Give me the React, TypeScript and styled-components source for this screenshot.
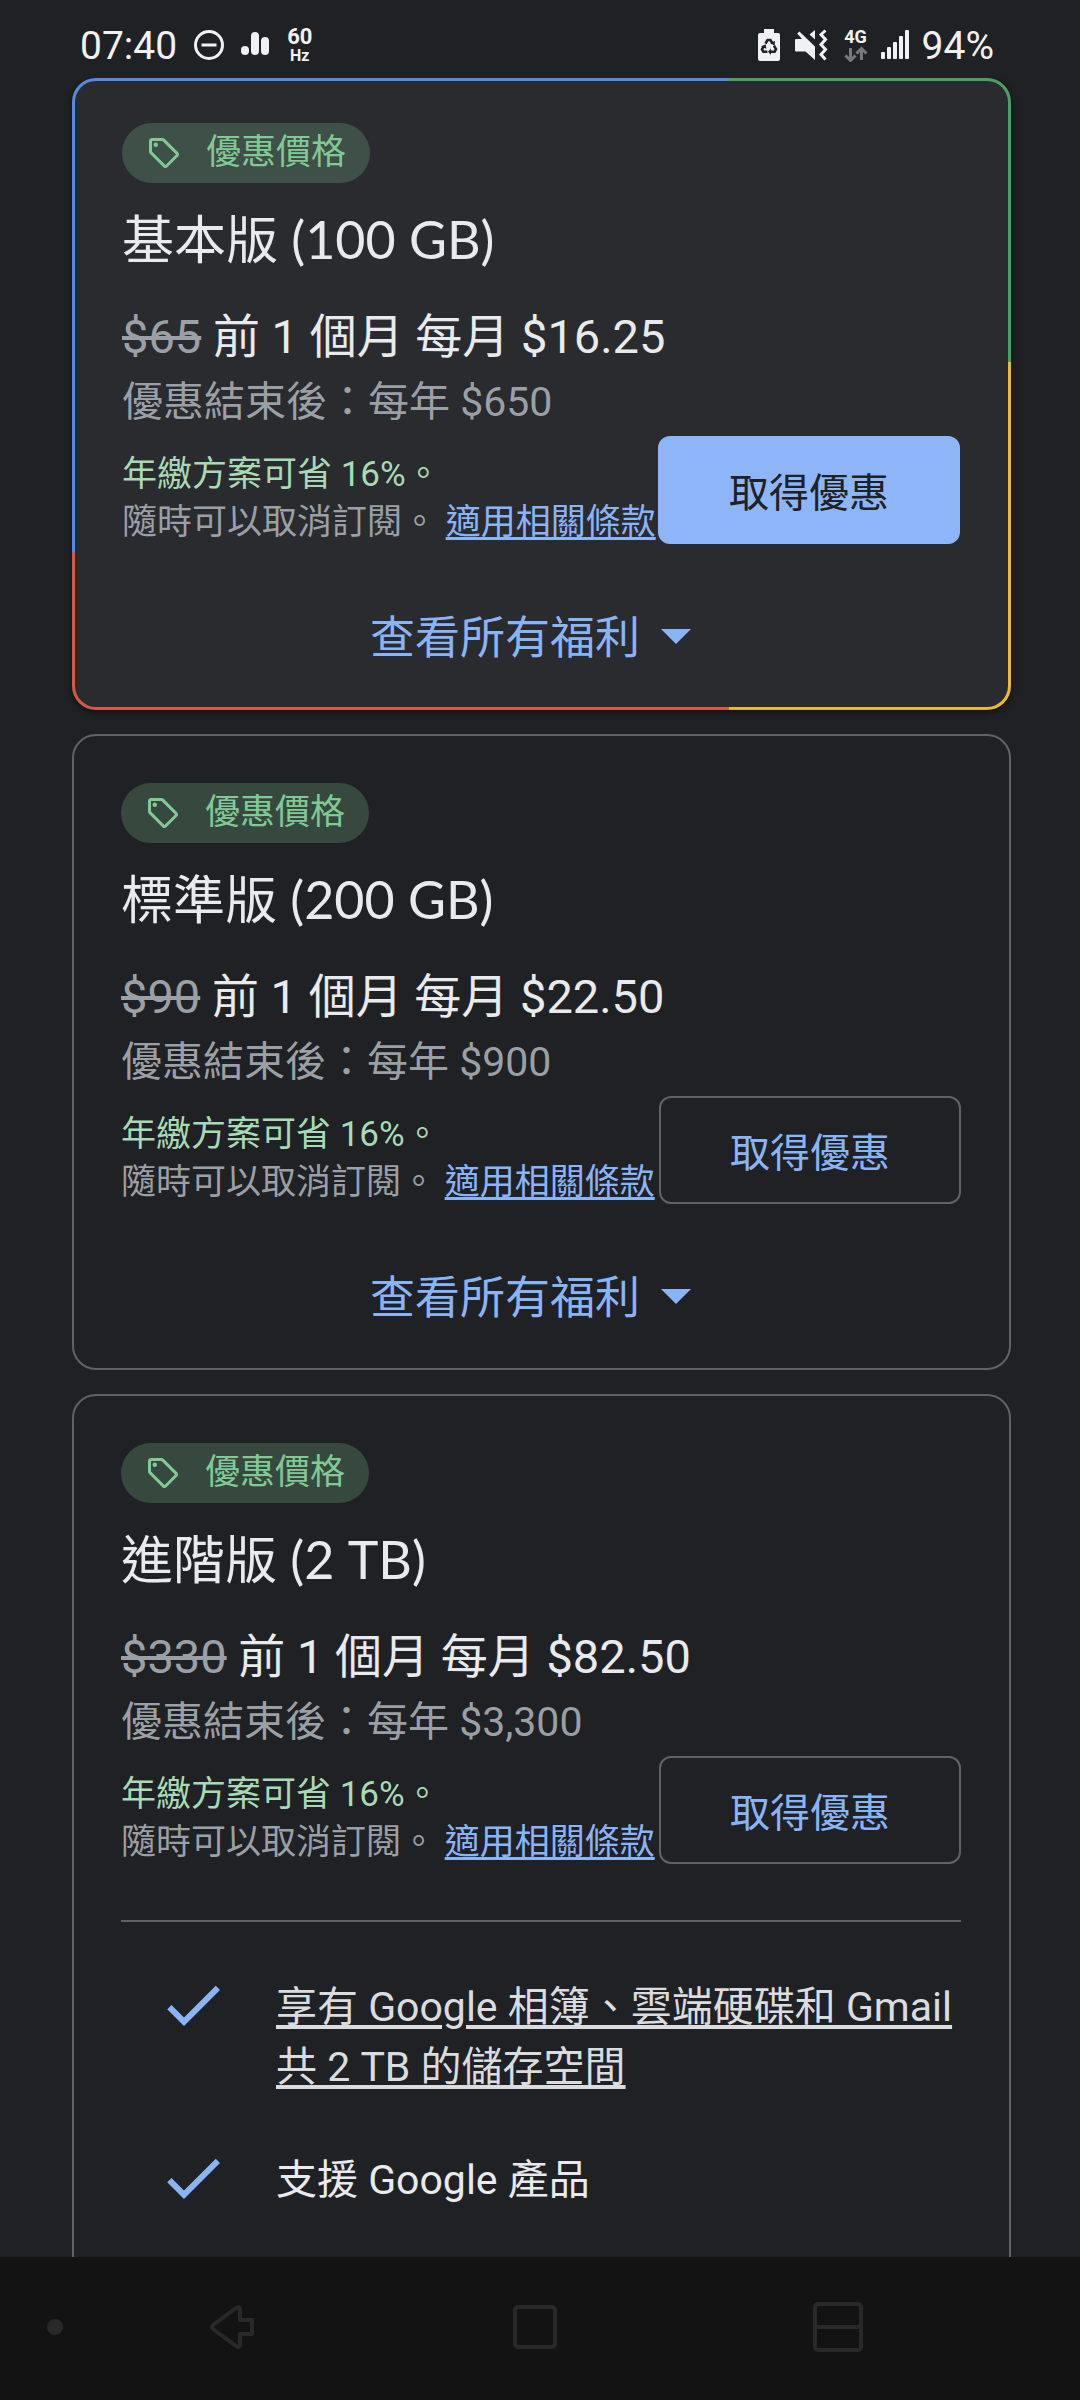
import React from "react";
import styled, { createGlobalStyle, css } from "styled-components";

const color = {
  page: "#202124",
  raised: "#2a2b2f",
  line: "#5f6368",
  text: "#e8eaed",
  muted: "#9aa0a6",
  blue: "#8ab4f8",
  green: "#81c995",
  paleGreen: "#a8dab5",
};

const cjk = `"Noto Sans CJK TC", sans-serif`;

const GlobalStyle = createGlobalStyle`
  *, *::before, *::after { box-sizing: border-box; }
  body {
    margin: 0;
    background: ${color.page};
    color: ${color.text};
    font-family: Roboto, ${cjk};
  }
  h2, p, ul { margin: 0; padding: 0; font-weight: 400; }
  button { font: inherit; margin: 0; cursor: pointer; }
  svg { flex: none; }
`;

const Screen = styled.div`
  display: flex;
  flex-direction: column;
  height: 100vh;
  overflow: hidden;
`;

/* ---------- status bar ---------- */

const StatusBar = styled.header`
  flex: none;
  display: flex;
  justify-content: space-between;
  height: 78px;
  padding: 12px 86px 0 80px;
  color: #f1f1f3;
`;

const StatusGroup = styled.div<{ $gap: number }>`
  display: flex;
  align-items: center;
  height: 66px;
  gap: ${(p) => p.$gap}px;
`;

const StatusText = styled.span`
  padding-top: 2px;
  font-size: 39px;
  line-height: 66px;
`;

const Stacked = styled.span`
  display: flex;
  flex-direction: column;
  align-items: center;
  font-weight: 700;
`;

const StackLine = styled.span<{ $size: number }>`
  font-size: ${(p) => p.$size}px;
  line-height: ${(p) => p.$size}px;
`;

/* ---------- plans ---------- */

const Plans = styled.main`
  flex: 1;
  min-height: 0;
  display: flex;
  flex-direction: column;
  gap: 24px;
  padding: 0 69px 0 72px;
  overflow: hidden;
`;

const Card = styled.section<{ $featured?: boolean; $open?: boolean }>`
  flex: none;
  border-radius: 24px;
  ${(p) =>
    p.$featured
      ? css`
          border: 3px solid transparent;
          padding: 42px 48px 36px 47px;
          background:
            linear-gradient(${color.raised}, ${color.raised}) padding-box,
            linear-gradient(#568ade, #568ade) 0 0 / 70% 75% no-repeat border-box,
            linear-gradient(#4aa063, #4aa063) 100% 0 / 31% 45% no-repeat border-box,
            linear-gradient(#d65848, #d65848) 0 100% / 70% 26% no-repeat border-box,
            linear-gradient(#eebb30, #eebb30) 100% 100% / 31% 56% no-repeat border-box;
          box-shadow: 0 2px 6px rgba(0, 0, 0, 0.5);
        `
      : css`
          border: 2px solid ${color.line};
          padding: 47px 48px ${p.$open ? 90 : 37}px 47px;
        `}
`;

const Badge = styled.span`
  display: inline-flex;
  align-items: center;
  gap: 24px;
  height: 60px;
  padding: 0 24px;
  border-radius: 30px;
  background: rgba(129, 201, 149, 0.24);
  color: ${color.green};
  font-size: 35px;
  line-height: 60px;
  vertical-align: top;
`;

const PlanName = styled.h2`
  margin-top: 20px;
  font-family: Lato, ${cjk};
  font-size: 52px;
  line-height: 72px;
`;

const Price = styled.p`
  margin-top: 30px;
  font-size: 47px;
  line-height: 64px;
`;

const OldPrice = styled.s`
  color: ${color.muted};
`;

const AfterOffer = styled.p`
  margin-top: 3px;
  color: ${color.muted};
  font-size: 41px;
  line-height: 60px;
`;

const ActionRow = styled.div`
  display: flex;
  justify-content: space-between;
  align-items: flex-start;
  margin-top: 4px;
`;

const Terms = styled.div`
  padding-top: 15px;
  color: ${color.muted};
  font-size: 35px;
  line-height: 48px;
  white-space: nowrap;
`;

const Saving = styled.p`
  color: ${color.paleGreen};
`;

const TermsLink = styled.a`
  color: ${color.blue};
  text-decoration: underline;
  text-decoration-thickness: 3px;
  text-decoration-skip-ink: none;
  text-underline-offset: 3px;
`;

const OfferButton = styled.button<{ $filled?: boolean }>`
  flex: none;
  width: 302px;
  height: 108px;
  padding: 0;
  border: 2px solid ${(p) => (p.$filled ? "#8eb5f7" : color.line)};
  border-radius: 12px;
  background: ${(p) => (p.$filled ? "#8eb5f7" : "transparent")};
  color: ${(p) => (p.$filled ? color.page : color.blue)};
  font-size: 40px;
`;

const BenefitsToggle = styled.button`
  display: flex;
  align-items: center;
  justify-content: center;
  width: 100%;
  height: 72px;
  margin-top: 52px;
  padding: 0;
  border: 0;
  background: none;
  color: ${color.blue};
  font-size: 45px;
  line-height: 64px;
`;

const ToggleLabel = styled.span`
  padding-top: 8px;
`;

const Benefits = styled.ul`
  display: flex;
  flex-direction: column;
  gap: 53px;
  margin-top: 53px;
  padding: 47px 0 0 36px;
  border-top: 2px solid ${color.line};
  list-style: none;
`;

const Benefit = styled.li`
  display: flex;
  align-items: flex-start;
  gap: 47px;
  font-size: 41px;
  line-height: 60px;
`;

const BenefitText = styled.div`
  padding-top: 8px;
  margin-bottom: -8px;
`;

const BenefitLink = styled.a`
  color: #dadce0;
  text-decoration: underline;
  text-decoration-thickness: 4px;
  text-underline-offset: 4px;
`;

/* ---------- navigation bar ---------- */

const NavBar = styled.nav`
  flex: none;
  display: grid;
  grid-template-columns: 80px 1fr 1fr 1fr 91px;
  align-items: center;
  height: 143px;
  background: #131313;
`;

const NavButton = styled.button<{ $small?: boolean }>`
  display: flex;
  align-items: center;
  justify-content: ${(p) => (p.$small ? "flex-end" : "center")};
  height: 100%;
  padding: 0 ${(p) => (p.$small ? 17 : 0)}px 4px 0;
  border: 0;
  background: none;
  color: #292929;
`;

/* ---------- icons ---------- */

const DoNotDisturbIcon = () => (
  <svg width="32" height="32" viewBox="0 0 32 32" fill="none" stroke="currentColor" strokeWidth="3" aria-hidden>
    <circle cx="16" cy="16" r="13.5" />
    <path d="M8.5 16h15" />
  </svg>
);

const BarsIcon = () => (
  <svg width="30" height="32" viewBox="0 0 30 32" fill="currentColor" aria-hidden>
    <rect x="0" y="17" width="8" height="9" rx="4" />
    <rect x="10" y="3" width="8" height="23" rx="4" />
    <rect x="20" y="8" width="8" height="18" rx="4" />
  </svg>
);

const BatteryIcon = () => (
  <svg width="22" height="32" viewBox="0 0 22 32" aria-hidden>
    <path d="M6 0h10v4h4a2 2 0 0 1 2 2v24a2 2 0 0 1-2 2H2a2 2 0 0 1-2-2V6a2 2 0 0 1 2-2h4z" fill="currentColor" />
    <g fill="none" stroke={color.page} strokeWidth="2.6">
      <path d="M7.4 14.6 9.6 11h2.8l2.2 3.6" />
      <path d="M16 16.6l2 3.6-1.4 2.6h-4" />
      <path d="M9.4 22.8H5.4L4 20.2l2-3.4" />
    </g>
    <g fill={color.page}>
      <path d="M16.8 11.8v4.8l-4.4-2.2z" />
      <path d="M13 19.4v6.6l-3-3.2z" />
      <path d="M3.2 17.6l4.4-2.4.8 4.6z" />
    </g>
  </svg>
);

const MutedIcon = () => (
  <svg width="38" height="32" viewBox="-2 0 38 32" aria-hidden>
    <path d="M1 10h6L2.200 4.600 4.400 2.400 20 17.500V31l-9.500-8.500H1a1 1 0 0 1-1-1V11a1 1 0 0 1 1-1z" fill="currentColor" />
    <path d="M20 1v9.500L14.500 5.500z" fill="currentColor" />
    <path d="M30.500 1.500l-4.500 4 4.500 5-4.500 5 4.500 5-4.500 5 4.500 5" fill="none" stroke="currentColor" strokeWidth="3" />
  </svg>
);

const DataArrowsIcon = () => (
  <svg width="24" height="16" viewBox="0 0 24 16" fill="none" stroke="#77787b" strokeWidth="3" aria-hidden>
    <path d="M6.500 2v12M1.500 9.500l5 5 5-5" />
    <path d="M17.500 14V3M12.500 7.500l5-5 5 5" />
  </svg>
);

const SignalIcon = () => (
  <svg width="28" height="30" viewBox="0 0 28 30" fill="currentColor" aria-hidden>
    <rect x="0" y="22" width="4" height="7" rx="1" />
    <rect x="6" y="17" width="4" height="12" rx="1" />
    <rect x="12" y="12" width="4" height="17" rx="1" />
    <rect x="18" y="6" width="4" height="23" rx="1" />
    <rect x="24" y="0" width="4" height="29" rx="1" />
  </svg>
);

const TagIcon = () => (
  <svg width="36" height="36" viewBox="0 0 24 24" fill="currentColor" aria-hidden>
    <path d="M21.410 11.580l-9-9C12.050 2.220 11.550 2 11 2H4c-1.100 0-2 .9-2 2v7c0 .55.22 1.050.59 1.420l9 9c.36.36.86.58 1.410.58s1.050-.22 1.410-.59l7-7c.37-.36.59-.86.59-1.410s-.23-1.060-.59-1.420zM13 20.010L4 11V4h7v-.01l9 9-7 7.020z" />
    <circle cx="6.500" cy="6.500" r="1.500" />
  </svg>
);

const DropDownIcon = () => (
  <svg width="72" height="72" viewBox="0 0 24 24" fill="currentColor" aria-hidden>
    <path d="M7 10l5 5 5-5z" />
  </svg>
);

const CheckIcon = () => (
  <svg width="72" height="72" viewBox="0 0 24 24" fill={color.blue} aria-hidden>
    <path d="M9 16.170L4.830 12l-1.420 1.410L9 19 21 7l-1.410-1.410z" />
  </svg>
);

const DotIcon = () => (
  <svg width="16" height="16" viewBox="0 0 16 16" fill="currentColor" aria-hidden>
    <circle cx="8" cy="8" r="8" />
  </svg>
);

const BackIcon = () => (
  <svg width="44" height="44" viewBox="0 0 44 44" fill="none" stroke="currentColor" strokeWidth="4" strokeLinejoin="round" aria-hidden>
    <path d="M30 15V4q-1-3-4-1L3 20q-2 2 0 4l23 17q3 2 4-1V29h12V15z" />
  </svg>
);

const HomeIcon = () => (
  <svg width="44" height="44" viewBox="0 0 44 44" fill="none" stroke="currentColor" strokeWidth="4" aria-hidden>
    <rect x="2" y="2" width="40" height="40" rx="3" />
  </svg>
);

const RecentsIcon = () => (
  <svg width="50" height="50" viewBox="0 0 50 50" fill="none" stroke="currentColor" strokeWidth="4" aria-hidden>
    <rect x="2" y="2" width="46" height="46" rx="3" />
    <path d="M2 25h46" />
  </svg>
);

/* ---------- data ---------- */

type BenefitItem = { text: string; link?: boolean };

type Plan = {
  name: string;
  was: string;
  now: string;
  yearly: string;
  featured?: boolean;
  benefits?: BenefitItem[];
};

const plans: Plan[] = [
  { name: "基本版 (100 GB)", was: "$65", now: "$16.25", yearly: "$650", featured: true },
  { name: "標準版 (200 GB)", was: "$90", now: "$22.50", yearly: "$900" },
  {
    name: "進階版 (2 TB)",
    was: "$330",
    now: "$82.50",
    yearly: "$3,300",
    benefits: [
      { text: "享有 Google 相簿、雲端硬碟和 Gmail 共 2 TB 的儲存空間", link: true },
      { text: "支援 Google 產品" },
    ],
  },
];

const PlanCard = ({ plan }: { plan: Plan }) => (
  <Card $featured={plan.featured} $open={!!plan.benefits}>
    <Badge>
      <TagIcon />
      優惠價格
    </Badge>
    <PlanName>{plan.name}</PlanName>
    <Price>
      <OldPrice>{plan.was}</OldPrice> 前 1 個月 每月 {plan.now}
    </Price>
    <AfterOffer>優惠結束後：每年 {plan.yearly}</AfterOffer>
    <ActionRow>
      <Terms>
        <Saving>年繳方案可省 16%。</Saving>
        <p>
          隨時可以取消訂閱。 <TermsLink href="#terms">適用相關條款</TermsLink>
        </p>
      </Terms>
      <OfferButton type="button" $filled={plan.featured}>
        取得優惠
      </OfferButton>
    </ActionRow>
    {plan.benefits ? (
      <Benefits>
        {plan.benefits.map((b) => (
          <Benefit key={b.text}>
            <CheckIcon />
            <BenefitText>{b.link ? <BenefitLink href="#storage">{b.text}</BenefitLink> : b.text}</BenefitText>
          </Benefit>
        ))}
      </Benefits>
    ) : (
      <BenefitsToggle type="button" aria-expanded={false}>
        <ToggleLabel>查看所有福利</ToggleLabel>
        <DropDownIcon />
      </BenefitsToggle>
    )}
  </Card>
);

export default function App() {
  return (
    <Screen lang="zh-Hant">
      <GlobalStyle />
      <StatusBar>
        <StatusGroup $gap={16}>
          <StatusText>07:40</StatusText>
          <DoNotDisturbIcon />
          <BarsIcon />
          <Stacked>
            <StackLine $size={22}>60</StackLine>
            <StackLine $size={16}>Hz</StackLine>
          </Stacked>
        </StatusGroup>
        <StatusGroup $gap={13}>
          <BatteryIcon />
          <MutedIcon />
          <Stacked>
            <StackLine $size={18}>4G</StackLine>
            <DataArrowsIcon />
          </Stacked>
          <SignalIcon />
          <StatusText>94%</StatusText>
        </StatusGroup>
      </StatusBar>
      <Plans>
        {plans.map((p) => (
          <PlanCard key={p.name} plan={p} />
        ))}
      </Plans>
      <NavBar>
        <NavButton type="button" $small aria-label="隱藏導覽列">
          <DotIcon />
        </NavButton>
        <NavButton type="button" aria-label="返回">
          <BackIcon />
        </NavButton>
        <NavButton type="button" aria-label="主畫面">
          <HomeIcon />
        </NavButton>
        <NavButton type="button" aria-label="最近使用">
          <RecentsIcon />
        </NavButton>
      </NavBar>
    </Screen>
  );
}
